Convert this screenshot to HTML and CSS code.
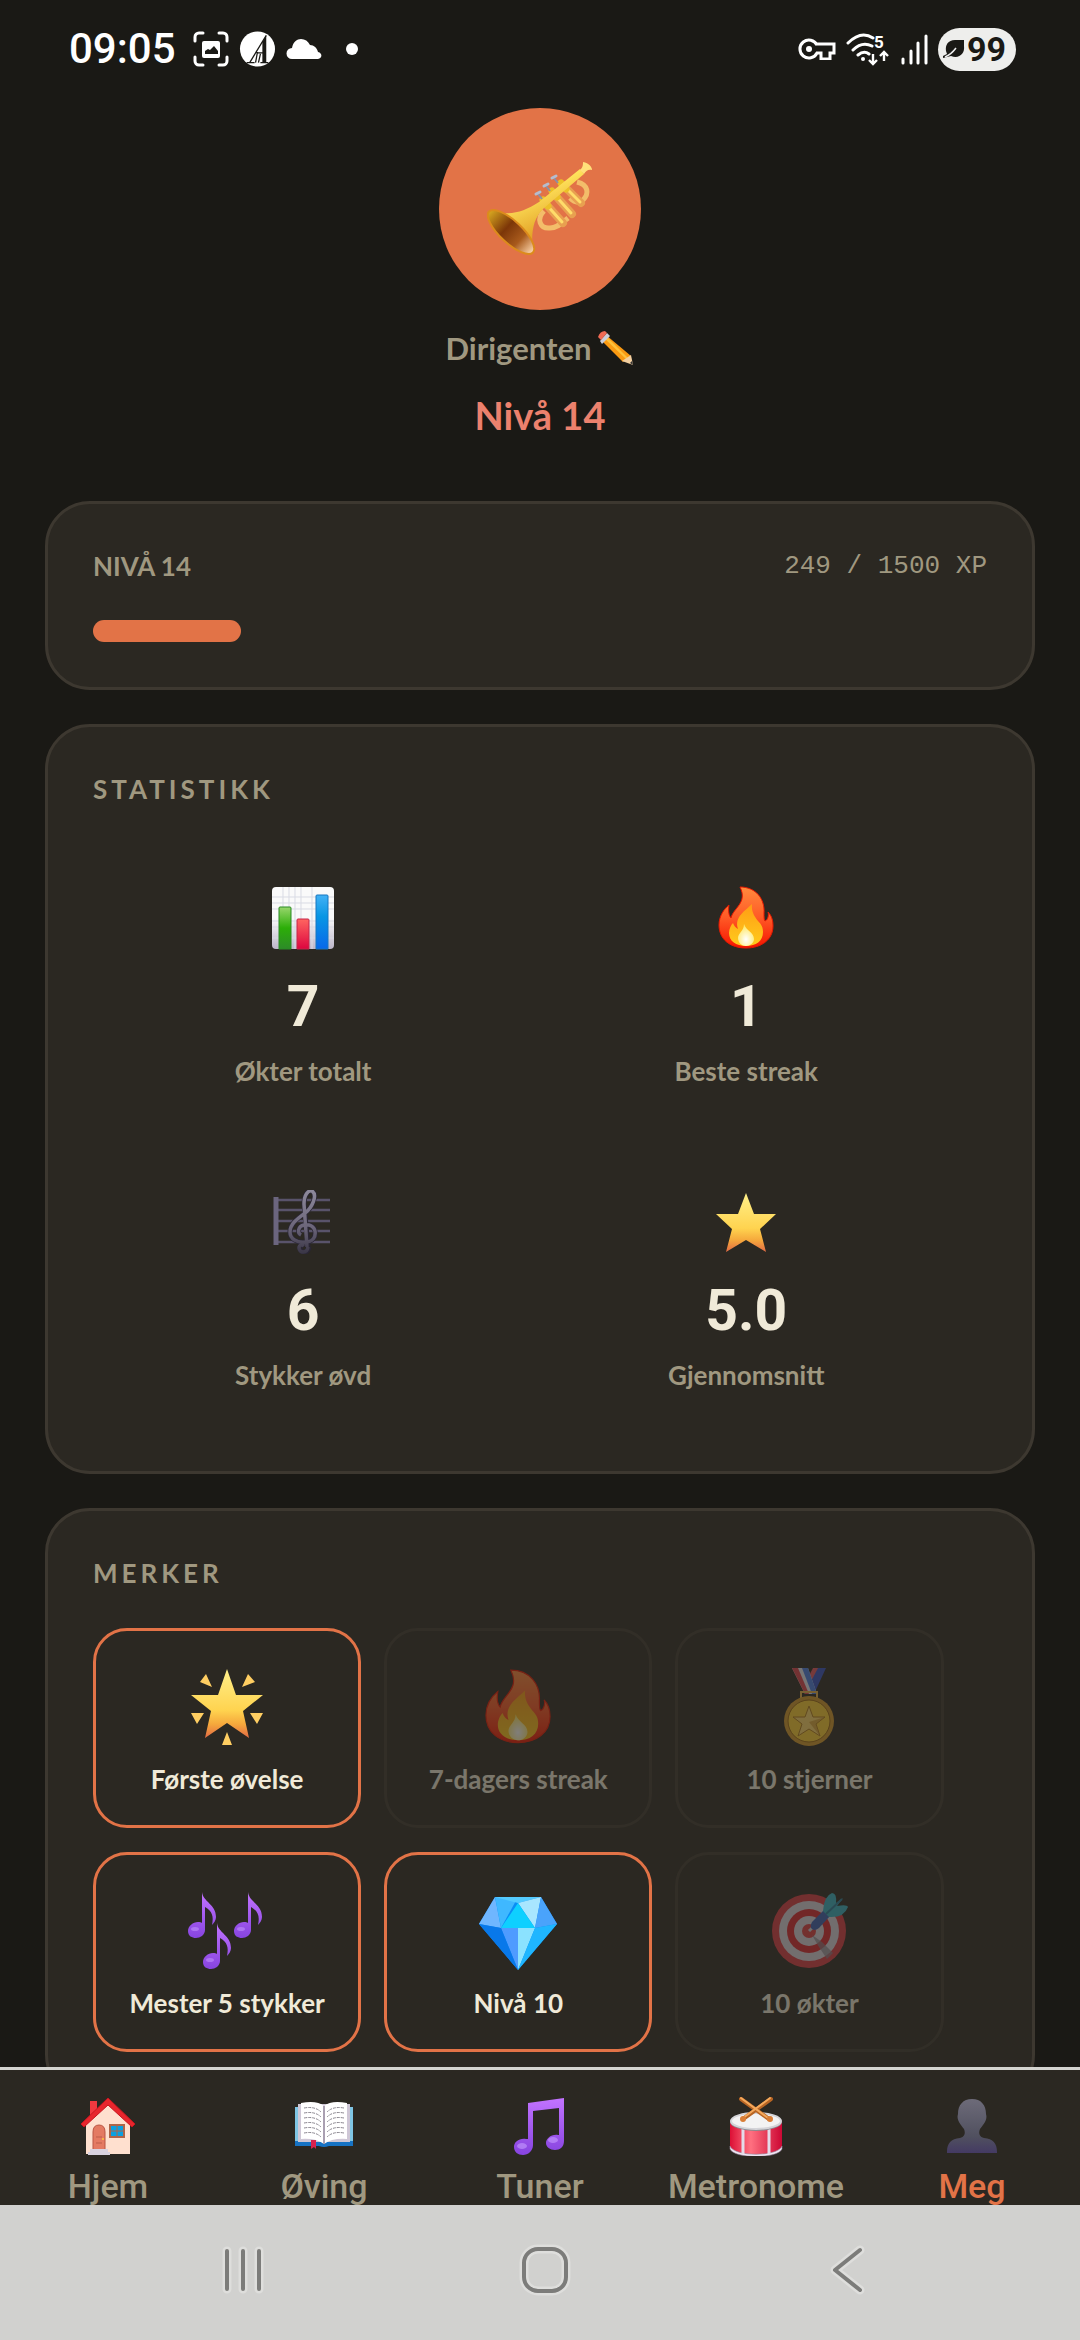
FILE: index.html
```html
<!DOCTYPE html>
<html lang="no">
<head>
  <meta charset="UTF-8">
  <meta name="viewport" content="width=device-width, initial-scale=1.0">
  <title>Min profil</title>
  <link rel="stylesheet" href="styles.css">
</head>
<body>

<!-- Delte ikoner og gradienter -->
<svg class="defs" width="0" height="0" aria-hidden="true">
  <defs>
    <linearGradient id="gold" x1="0" y1="0" x2="0" y2="1">
      <stop offset="0" stop-color="#fff08a"/><stop offset="0.6" stop-color="#ffd34f"/><stop offset="0.8" stop-color="#f5a83c"/><stop offset="1" stop-color="#e26a45"/>
    </linearGradient>
    <linearGradient id="flameRed" x1="0" y1="0" x2="0" y2="1">
      <stop offset="0" stop-color="#ff8a3d"/><stop offset="0.5" stop-color="#ff5a26"/><stop offset="1" stop-color="#f51400"/>
    </linearGradient>
    <linearGradient id="flameYellow" x1="0" y1="0" x2="0" y2="1">
      <stop offset="0" stop-color="#ff9d14"/><stop offset="1" stop-color="#ffcb1c"/>
    </linearGradient>
    <radialGradient id="flameCore" cx="0.5" cy="0.7" r="0.6">
      <stop offset="0" stop-color="#ffffff"/><stop offset="1" stop-color="#ffe96b"/>
    </radialGradient>
    <linearGradient id="purple" x1="0" y1="0" x2="0" y2="1">
      <stop offset="0" stop-color="#c273ff"/><stop offset="1" stop-color="#8744e0"/>
    </linearGradient>
    <linearGradient id="slate" x1="0" y1="0" x2="0" y2="1">
      <stop offset="0" stop-color="#8d899b"/><stop offset="0.6" stop-color="#6b6579"/><stop offset="1" stop-color="#3c3848"/>
    </linearGradient>
    <symbol id="flame" viewBox="0 0 64 64">
      <path d="M26 1C42 1 51 13 50 27c0 4 0 7 1 8 3-1 4-6 3-9 4 4 5 9 5 14 0 14-12 22-27 22S5 54 5 39c0-9 5-16 10-20-1 6 0 11 2 13 2-10 17-15 9-31z" fill="url(#flameRed)" stroke="#e81800" stroke-width="1"/>
      <path d="M38 18c-1 8 3 13 6 17 4 4 5 7 5 11 0 9-7 14-17 14S15 55 15 47c0-4 2-8 4-10 1 3 3 5 5 6-4-12 7-18 14-25z" fill="url(#flameYellow)"/>
      <path d="M30 38c2 7 10 8 10 15 0 4-4 7-8 7s-8-3-8-8c0-5 6-7 6-14z" fill="url(#flameCore)"/>
    </symbol>
    <symbol id="note" viewBox="0 0 30 48">
      <path d="M14 1c1 10 14 12 14 25 0 3-2 6-4 8 2-9 0-14-7-18v23c0 5-5 8-9 8s-8-2-8-7 5-9 10-9c2 0 3 0 4 1z" fill="url(#purple)"/>
      <ellipse cx="7" cy="38" rx="4" ry="2" fill="#c79bff" opacity="0.5"/>
    </symbol>
  </defs>
</svg>

<div class="app">

  <header class="status-bar">
    <div class="status-left">
      <time class="clock">09:05</time>
      <svg width="36" height="36" viewBox="0 0 36 36" aria-hidden="true">
        <path d="M2 10V6a4 4 0 0 1 4-4h4M26 2h4a4 4 0 0 1 4 4v4M34 26v4a4 4 0 0 1-4 4h-4M10 34H6a4 4 0 0 1-4-4v-4" fill="none" stroke="#fff" stroke-width="3" stroke-linecap="round"/>
        <rect x="9" y="10" width="18" height="17" rx="2" fill="#fff"/>
        <path d="M12 23v-3l3-2 2 1 4-4 4 5v3z" fill="#1a1915"/>
      </svg>
      <svg width="37" height="38" viewBox="0 0 38 38" aria-hidden="true">
        <circle cx="19" cy="19" r="18" fill="#fff"/>
        <path d="M11 33L28 5M8 33h8M22 33h8M18 23h7M19 22l-2 11M22 24l-2 9" fill="none" stroke="#1a1915" stroke-width="1.3"/>
        <path d="M24 12l4-7v28h-4z" fill="#1a1915"/>
      </svg>
      <svg width="36" height="22" viewBox="0 0 36 22" aria-hidden="true">
        <path d="M6 21a5 5 0 0 1 0-11C7 4 11 1 15 1c4 0 7 2 9 6 4 0 7 3 8 7 5 1 4 7 0 7z" fill="#fff"/>
      </svg>
      <span class="more-dot"></span>
    </div>
    <div class="status-right">
      <svg width="38" height="22" viewBox="0 0 38 22" aria-hidden="true">
        <path d="M19 7A9 9 0 1 0 19 15h4v6h9v-6h4V6H19z" fill="none" stroke="#fff" stroke-width="3"/>
        <circle cx="11" cy="11" r="3" fill="#fff"/>
      </svg>
      <svg class="wifi" width="44" height="36" viewBox="0 0 44 36" aria-hidden="true">
        <path d="M2 12q13-13 25-5M7 19q9-9 19-4M12 24q6-5 11-1" fill="none" stroke="#fff" stroke-width="3" stroke-linecap="round"/>
        <circle cx="17" cy="28" r="2" fill="#fff"/>
        <path d="M27 23v10M23 29l4 4 4-4M38 30V21M34 25l4-4 4 4" fill="none" stroke="#fff" stroke-width="2.4"/>
        <text x="28" y="17" font-family="Roboto, sans-serif" font-size="17" font-weight="700" fill="#fff">5</text>
      </svg>
      <svg width="28" height="32" viewBox="0 0 28 32" aria-hidden="true">
        <path d="M3 26v4M11 18v12M18 10v20M26 3v27" stroke="#fff" stroke-width="3" stroke-linecap="round"/>
      </svg>
      <span class="battery">
        <svg width="22" height="20" viewBox="0 0 22 20" aria-hidden="true">
          <path d="M21 1H12C5 1 2 6 3 12l1 3-4 2v2l8-2c8 3 14-2 13-10z" fill="#1a1915"/>
          <path d="M2 18C7 16 10 13 13 9" stroke="#eee" stroke-width="1.5" fill="none"/>
        </svg>
        99
      </span>
    </div>
  </header>

  <main class="content">
    <section class="profile">
      <div class="avatar">
        <svg width="106" height="96" viewBox="0 0 106 96" role="img" aria-label="Trompet">
          <defs>
            <linearGradient id="brass" x1="0" y1="0" x2="0.5" y2="1">
              <stop offset="0" stop-color="#d99a10"/><stop offset="0.4" stop-color="#ffe35c"/><stop offset="1" stop-color="#d88a12"/>
            </linearGradient>
            <linearGradient id="bell" x1="0" y1="0" x2="1" y2="0">
              <stop offset="0" stop-color="#d8a820"/><stop offset="0.4" stop-color="#7c3608"/><stop offset="0.7" stop-color="#a85a1c"/><stop offset="1" stop-color="#ffd9b0"/>
            </linearGradient>
          </defs>
          <path d="M90 21c12 3 12 12 6 18-5 4-9 2-13-2M57 50c-8 8-4 18 6 17 7 0 12-5 18-10" fill="none" stroke="#f3bd6a" stroke-width="5"/>
          <path d="M58 42l18 20M67 33l18 20M76 24l18 18" stroke="#e8a050" stroke-width="8" stroke-linecap="round"/>
          <path d="M57 41l18 20M66 32l18 20M75 23l18 18" stroke="#ffdc6a" stroke-width="3" stroke-linecap="round"/>
          <path d="M56 39l5 6M65 30l5 6M74 22l5 6" stroke="#ecc028" stroke-width="7" stroke-linecap="round"/>
          <path d="M51 33l4 5M59 25l4 5M67 17l4 5" stroke="#8b8fa6" stroke-width="2"/>
          <path d="M49 33l4-2M57 25l4-2M65 17l4-2" stroke="#b5bccd" stroke-width="3" stroke-linecap="round"/>
          <path d="M2 50c20 5 33 2 50-9L93 8l4 5L57 47c-12 11-13 27-11 45z" fill="url(#brass)"/>
          <path d="M93 9c3-3 3-5 3-8 6 1 9 5 9 8-4-1-6 1-8 4z" fill="#ffe07a"/>
          <ellipse cx="24" cy="71" rx="30" ry="11" transform="rotate(43 24 71)" fill="url(#bell)" stroke="#dc8b1c" stroke-width="2"/>
        </svg>
      </div>
      <button class="name" type="button">
        Dirigenten
        <svg width="36" height="36" viewBox="0 0 36 36" aria-hidden="true">
          <path d="M8 5l25 21-8 6L3 10z" fill="#fb9a12"/>
          <path d="M6 8l22 21 2-1L8 6z" fill="#ffc13a"/>
          <path d="M33 25l2 10-11-4z" fill="#f3cfa0"/>
          <path d="M32 33l3 2-1-4z" fill="#333"/>
          <path d="M2 11L9 3l3 3-8 8z" fill="#c9cdd8"/>
          <path d="M0 7q2-6 7-6l2 2-6 7z" fill="#ef6a53"/>
        </svg>
      </button>
      <h1 class="level">Nivå 14</h1>
    </section>

    <section class="card">
      <div class="xp-row">
        <span class="xp-level">NIVÅ 14</span>
        <span class="xp-value">249 / 1500 XP</span>
      </div>
      <div class="xp-track">
        <div class="xp-fill" style="width: 16.6%"></div>
      </div>
    </section>

    <section class="card">
      <h2>STATISTIKK</h2>
      <div class="stats">
        <div class="stat">
          <svg class="stat-icon" viewBox="0 0 64 64" aria-hidden="true">
            <defs>
              <linearGradient id="paper" x1="0" y1="0" x2="0" y2="1"><stop offset="0.5" stop-color="#fafafa"/><stop offset="1" stop-color="#bdb6c9"/></linearGradient>
              <linearGradient id="barGreen" x1="0" y1="0" x2="0" y2="1"><stop offset="0" stop-color="#98d66c"/><stop offset="0.5" stop-color="#2cae08"/><stop offset="1" stop-color="#2d8b28"/></linearGradient>
              <linearGradient id="barRed" x1="0" y1="0" x2="0" y2="1"><stop offset="0" stop-color="#ff6560"/><stop offset="1" stop-color="#dd053f"/></linearGradient>
              <linearGradient id="barBlue" x1="0" y1="0" x2="0" y2="1"><stop offset="0" stop-color="#42b1f5"/><stop offset="0.4" stop-color="#0796e4"/><stop offset="1" stop-color="#0868ea"/></linearGradient>
            </defs>
            <rect x="1" y="1" width="62" height="62" rx="4" fill="url(#paper)"/>
            <path d="M1 11h62M1 17h62M1 23h62M1 35h62M1 41h62M1 52h62M12 1v62M18 1v62M24 1v62M30 1v62M41 1v62" stroke="#d9dbe4" stroke-width="1"/>
            <path d="M8 63V22q0-1 1-1h10q1 0 1 1v41z" fill="url(#barGreen)" stroke="#2b8b24"/>
            <path d="M26 63V34q0-1 1-1h10q1 0 1 1v29z" fill="url(#barRed)" stroke="#c6274a"/>
            <path d="M45 63V10q0-1 1-1h10q1 0 1 1v53z" fill="url(#barBlue)" stroke="#1676c0"/>
          </svg>
          <strong>7</strong>
          <span>Økter totalt</span>
        </div>
        <div class="stat">
          <svg class="stat-icon" viewBox="0 0 64 64" aria-hidden="true"><use href="#flame"/></svg>
          <strong>1</strong>
          <span>Beste streak</span>
        </div>
        <div class="stat">
          <svg class="stat-icon" viewBox="0 0 64 64" aria-hidden="true">
            <path d="M5 10h54M5 20h54M5 31h54M5 41h54M5 52h54" stroke="#59536b" stroke-width="2.4"/>
            <path d="M5 7v48" stroke="#6b657e" stroke-width="5"/>
            <path d="M38 57c-1 7-9 6-9 1 0-3 3-4 5-2M37 57L33 14C33 5 37 0 41 1c6 4 0 17-7 22-8 6-15 11-15 19 0 7 7 11 15 10 8 0 11-5 10-11-1-5-6-7-11-6-6 1-7 8-3 10" fill="none" stroke="#2a2635" stroke-width="5"/>
            <path d="M37 57c-1 7-9 6-9 1 0-3 3-4 5-2M36 57L33 14C33 5 37 0 41 1c6 4 0 17-7 22-8 6-15 11-15 19 0 7 7 11 15 10 8 0 11-5 10-11-1-5-6-7-11-6-6 1-7 8-3 10" fill="none" stroke="url(#slate)" stroke-width="3.5"/>
          </svg>
          <strong>6</strong>
          <span>Stykker øvd</span>
        </div>
        <div class="stat">
          <svg class="stat-icon" viewBox="0 0 64 64" aria-hidden="true">
            <path d="M32 3l8 21h22L46 39l6 23-20-12-20 12 6-23L2 24h22z" fill="url(#gold)"/>
          </svg>
          <strong>5.0</strong>
          <span>Gjennomsnitt</span>
        </div>
      </div>
    </section>

    <section class="card">
      <h2>MERKER</h2>
      <div class="badges">
        <div class="badge unlocked">
          <svg class="badge-icon" viewBox="0 0 80 80" aria-hidden="true">
            <path d="M40 2l9 26h27L56 44l6 27-22-15-22 15 6-27L4 28h27z" fill="url(#gold)"/>
            <path d="M19 7l6 13-12-5zM61 7l-6 13 13-5zM4 46h13l-7 11zM76 46H63l7 11zM40 65l5 13H35z" fill="#ffce62"/>
          </svg>
          <span>Første øvelse</span>
        </div>
        <div class="badge">
          <svg class="badge-icon" viewBox="0 0 80 80" aria-hidden="true"><use href="#flame" x="2" y="2" width="76" height="76"/></svg>
          <span>7-dagers streak</span>
        </div>
        <div class="badge">
          <svg class="badge-icon" viewBox="0 0 80 80" aria-hidden="true">
            <path d="M47 1h10L45 27h-9z" fill="#3451c4"/>
            <path d="M44 1h5L38 22l-3-4z" fill="#e65560"/>
            <path d="M23 1h16l9 26H36z" fill="#e9e9f2"/>
            <path d="M23 1h6l11 26h-4z" fill="#e0434e"/>
            <path d="M33 1h6l9 26h-5z" fill="#4b7ee6"/>
            <path d="M32 25h16v6H32z" fill="none" stroke="#eab34c" stroke-width="2"/>
            <circle cx="40" cy="54" r="25" fill="#d69a2a"/>
            <circle cx="40" cy="54" r="21" fill="#ffcf32" stroke="#9f6a12" stroke-width="1"/>
            <path d="M40 39l4 11h12l-9 7 4 12-11-7-11 7 4-12-9-7h12z" fill="#ffd668" stroke="#b37d1b" stroke-width="1"/>
            <path d="M40 39v16l16-5-9 7 4 12-11-14-11 14 11-14z" fill="#c98d22" opacity="0.6"/>
          </svg>
          <span>10 stjerner</span>
        </div>
        <div class="badge unlocked">
          <svg class="badge-icon" viewBox="0 0 80 80" aria-hidden="true">
            <use href="#note" x="0" y="0" width="32" height="48"/>
            <use href="#note" x="46" y="0" width="32" height="48"/>
            <use href="#note" x="15" y="31" width="32" height="48"/>
          </svg>
          <span>Mester 5 stykker</span>
        </div>
        <div class="badge unlocked">
          <svg class="badge-icon" viewBox="0 0 80 80" aria-hidden="true">
            <path d="M17 6h46l16 27-39 46L1 33z" fill="#0a8df5"/>
            <path d="M17 6L1 33l22 4z" fill="#6fb6ff"/>
            <path d="M17 6h23L23 37z" fill="#3fb8ff"/>
            <path d="M17 6h46L40 12z" fill="#54cbff"/>
            <path d="M40 12l23-6-6 31z" fill="#a8e6ff"/>
            <path d="M63 6l16 27-22 4z" fill="#4aa3fb"/>
            <path d="M40 12l17 25H23z" fill="#0ed0ff"/>
            <path d="M23 37h17v42z" fill="#4f9bff"/>
            <path d="M40 37h17L40 79z" fill="#8be2ff"/>
            <path d="M57 37l22-4-39 46z" fill="#1fb6ff"/>
            <path d="M1 33l22 4 17 42z" fill="#0878ea"/>
          </svg>
          <span>Nivå 10</span>
        </div>
        <div class="badge">
          <svg class="badge-icon" viewBox="0 0 80 80" aria-hidden="true">
            <circle cx="40" cy="40" r="37" fill="#dc3b44"/>
            <circle cx="40" cy="40" r="30" fill="#dcd6e0"/>
            <circle cx="40" cy="40" r="22" fill="#dd2730"/>
            <circle cx="40" cy="40" r="15" fill="#dcd6e0"/>
            <circle cx="40" cy="40" r="7" fill="#e03d42"/>
            <path d="M43 44l10 7 11 11-6 6-8-12z" fill="#8b8490" opacity="0.7"/>
            <path d="M40 40l20-19" stroke="#d0d4e0" stroke-width="3"/>
            <path d="M43 31l12-12 6 6-11 12q-5 4-8 0-1-3 1-6z" fill="#3a60b4"/>
            <path d="M54 20q1-15 9-18 5 0 4 10l7-5-6 8q10-2 11 1-4 11-19 10z" fill="#35b2c4"/>
            <path d="M57 23L73 8" stroke="#2a7c9c" stroke-width="2"/>
          </svg>
          <span>10 økter</span>
        </div>
      </div>
    </section>
  </main>

  <nav class="tab-bar">
    <a href="#hjem">
      <svg class="tab-icon" viewBox="0 0 60 60" aria-hidden="true">
        <path d="M12 5h7v14h-7z" fill="#f0393f"/>
        <path d="M8 25L30 7l22 20v31H8z" fill="#ffe0cf"/>
        <path d="M30 2l27 26-3 3L30 9 6 31l-3-3z" fill="#e8262d" stroke="#c9151f" stroke-width="1"/>
        <path d="M15 54V36q0-7 6-7t6 7v18z" fill="#e47a62" stroke="#b95442"/>
        <path d="M18 41h6M18 47h6" stroke="#bd5d48"/>
        <circle cx="25" cy="43" r="1" fill="#ffc83b"/>
        <path d="M32 29h14v12H32z" fill="#0aa0e0" stroke="#b06548" stroke-width="2"/>
        <path d="M39 29v12M32 35h14" stroke="#b06548"/>
        <path d="M12 53h18v3h2v3H10v-3h2z" fill="#d9d3e0"/>
      </svg>
      <span>Hjem</span>
    </a>
    <a href="#oving">
      <svg class="tab-icon" viewBox="0 0 60 60" aria-hidden="true">
        <path d="M1 11h58v39H35q-5 2-10 0H1z" fill="#1773c4"/>
        <path d="M1 11h58v34H1z" fill="#7fc5e4"/>
        <path d="M4 8h52v38H4z" fill="#cfc7d6"/>
        <path d="M7 7q16-3 23 3 7-6 23-3v36q-15-1-23 5-8-6-23-5z" fill="#fff"/>
        <path d="M30 10v38" stroke="#aaa0b2" stroke-width="2"/>
        <path d="M10 12q11-2 17 4M10 17q11-2 17 4M10 22q11-2 17 4M10 27q11-2 17 4M10 32q11-2 17 4M10 37q11-2 17 4M50 12q-11-2-17 4M50 17q-11-2-17 4M50 22q-11-2-17 4M50 27q-11-2-17 4M50 32q-11-2-17 4M50 37q-11-2-17 4" fill="none" stroke="#8b8790" stroke-width="1" stroke-dasharray="3 1"/>
        <path d="M17 44h5v9l-2-2-3 2z" fill="#d9214e"/>
      </svg>
      <span>Øving</span>
    </a>
    <a href="#tuner">
      <svg class="tab-icon" viewBox="0 0 60 60" aria-hidden="true">
        <path d="M18 7l36-5v43c0 6-4 9-9 9s-9-3-9-7 5-9 12-8h1V12l-26 3v34c0 6-5 10-10 10s-9-3-9-8 5-9 12-8h2z" fill="url(#purple)"/>
        <ellipse cx="43" cy="44" rx="5" ry="3" fill="#c79bff" opacity="0.6"/>
        <ellipse cx="12" cy="50" rx="5" ry="3" fill="#c79bff" opacity="0.6"/>
      </svg>
      <span>Tuner</span>
    </a>
    <a href="#metronome">
      <svg class="tab-icon" viewBox="0 0 60 60" aria-hidden="true">
        <defs><linearGradient id="drum"><stop offset="0" stop-color="#dc0f35"/><stop offset="0.4" stop-color="#ff7080"/><stop offset="1" stop-color="#cc0834"/></linearGradient></defs>
        <path d="M4 26v25c4 11 48 11 52 0V26z" fill="url(#drum)"/>
        <path d="M4 50c4 11 48 11 52 0v3c-4 10-48 10-52 0z" fill="#efe7f4" stroke="#8e7f96" stroke-width="0.6"/>
        <path d="M17 33v25M43 33v25" stroke="#e4dbe9" stroke-width="3"/>
        <ellipse cx="30" cy="26" rx="26" ry="9" fill="#8b8b90"/>
        <ellipse cx="30" cy="25" rx="25" ry="8" fill="#f3f3f3" stroke="#d4d4d8" stroke-width="2"/>
        <path d="M15 3l28 20M45 3L17 23" stroke="#b86524" stroke-width="4" stroke-linecap="round"/>
        <path d="M15 2l27 20M44 2L17 22" stroke="#f5a95c" stroke-width="2" stroke-linecap="round"/>
        <circle cx="17" cy="23" r="3" fill="#d97e36"/><circle cx="44" cy="23" r="3" fill="#d97e36"/>
      </svg>
      <span>Metronome</span>
    </a>
    <a href="#meg" class="active">
      <svg class="tab-icon" viewBox="0 0 60 60" aria-hidden="true">
        <defs><linearGradient id="person" x1="0" y1="0" x2="0" y2="1"><stop offset="0" stop-color="#6d6b79"/><stop offset="0.7" stop-color="#50505f"/><stop offset="1" stop-color="#443a63"/></linearGradient></defs>
        <path d="M30 3c9 0 14 6 14 15 2 6-3 11-6 15-2 5 0 8 4 9 9 1 13 5 13 14v1H5v-1c0-9 4-13 13-14 4-1 6-4 4-9-3-4-8-9-6-15C16 9 21 3 30 3z" fill="url(#person)"/>
      </svg>
      <span>Meg</span>
    </a>
  </nav>

  <footer class="system-nav">
    <button type="button" aria-label="Nylige apper">
      <svg width="52" height="52" viewBox="0 0 52 52">
        <path class="halo" d="M10 7v38M26 7v38M42 7v38"/>
        <path class="line" d="M10 7v38M26 7v38M42 7v38"/>
      </svg>
    </button>
    <button type="button" aria-label="Hjem">
      <svg width="52" height="52" viewBox="0 0 52 52">
        <rect class="halo" x="5" y="5" width="42" height="42" rx="14"/>
        <rect class="line" x="5" y="5" width="42" height="42" rx="14"/>
      </svg>
    </button>
    <button type="button" aria-label="Tilbake">
      <svg width="52" height="52" viewBox="0 0 52 52">
        <path class="halo" d="M39 6L14 26l25 20"/>
        <path class="line" d="M39 6L14 26l25 20"/>
      </svg>
    </button>
  </footer>

</div>

</body>
</html>
```

FILE: styles.css
```css
* {
    box-sizing: border-box;
}
body {
    margin: 0;
    background: #1a1915;
    color: #f0ead8;
    font-family: Lato, sans-serif;
    font-size: 26px;
    font-weight: 700;
    line-height: 34px;
}
svg {
    display: block;
}
button {
    border: none;
    padding: 0;
    background: none;
    font: inherit;
    color: inherit;
    cursor: pointer;
}
.defs {
    position: absolute;
}
.app {
    display: flex;
    flex-direction: column;
    height: 100vh;
}

/* Statuslinje */
.status-bar {
    display: flex;
    justify-content: space-between;
    align-items: center;
    flex: none;
    height: 98px;
    padding: 0 64px 0 69px;
    color: #fff;
    font-family: Roboto, sans-serif;
}
.status-left {
    display: flex;
    align-items: center;
    gap: 10px;
}
.status-right {
    display: flex;
    align-items: center;
    gap: 10px;
}
.clock {
    margin-right: 7px;
    font-size: 42px;
    font-weight: 500;
}
.more-dot {
    width: 12px;
    height: 12px;
    margin-left: 14px;
    border-radius: 50%;
    background: #fff;
}
.battery {
    display: flex;
    align-items: center;
    gap: 2px;
    height: 43px;
    padding: 0 10px 0 5px;
    border-radius: 22px;
    background: #eeeeec;
    color: #1a1915;
    font-size: 34px;
    font-weight: 700;
}

/* Innhold */
.content {
    flex: 1;
    min-height: 0;
    overflow-y: auto;
    scrollbar-width: none;
    padding: 10px 45px 45px;
}
.profile {
    display: flex;
    flex-direction: column;
    align-items: center;
    margin-bottom: 62px;
}
.avatar {
    display: flex;
    align-items: center;
    justify-content: center;
    width: 202px;
    height: 202px;
    border-radius: 50%;
    background: #e27347;
}
.name {
    display: flex;
    align-items: center;
    gap: 7px;
    margin-top: 18px;
    color: #a09880;
    font-size: 31px;
    line-height: 40px;
}
.level {
    margin: 23px 0 0;
    color: #ec816d;
    font-size: 38px;
    font-weight: 700;
    line-height: 48px;
}
.card {
    margin-bottom: 34px;
    padding: 45px;
    border: 3px solid #3d3830;
    border-radius: 45px;
    background: #2b2822;
}
.card h2 {
    margin: 0 0 38px;
    color: #a09880;
    font-size: 26px;
    font-weight: 700;
    letter-spacing: 4px;
}
.xp-row {
    display: flex;
    justify-content: space-between;
    margin-bottom: 37px;
    color: #a09880;
}
.xp-value {
    font-family: "Liberation Mono", monospace;
    font-weight: 400;
}
.xp-track {
    height: 22px;
}
.xp-fill {
    height: 100%;
    border-radius: 11px;
    background: #e27347;
}

.stats {
    display: flex;
    flex-wrap: wrap;
    gap: 26px 23px;
}
.stat {
    display: flex;
    flex-direction: column;
    align-items: center;
    width: 47%;
    padding: 42px 0 34px;
    color: #a09880;
}
.stat-icon {
    width: 64px;
    height: 64px;
}
.stat strong {
    margin: 23px 0 13px;
    color: #f0ead8;
    font-family: Roboto, sans-serif;
    font-size: 57px;
    font-weight: 700;
    line-height: 68px;
}

.badges {
    display: flex;
    flex-wrap: wrap;
    gap: 24px 23px;
}
.badge {
    display: flex;
    flex-direction: column;
    align-items: center;
    width: 30%;
    padding: 36px 0 29px;
    border: 3px solid #3d3830;
    border-radius: 34px;
    gap: 15px;
    white-space: nowrap;
    opacity: 0.4;
}
.badge.unlocked {
    border-color: #e27347;
    opacity: 1;
}
.badge-icon {
    width: 80px;
    height: 80px;
}

/* Faner nederst */
.tab-bar {
    display: grid;
    grid-template-columns: repeat(5, 1fr);
    flex: none;
    height: 138px;
    overflow: hidden;
    border-top: 3px solid #d4d4d0;
    background: #2b2822;
    font-family: Roboto, sans-serif;
    font-size: 34px;
    font-weight: 500;
    line-height: 40px;
}
.tab-bar a {
    display: flex;
    flex-direction: column;
    align-items: center;
    gap: 10px;
    padding-top: 26px;
    color: #a09880;
    text-decoration: none;
}
.tab-bar .active {
    color: #e27347;
}
.tab-icon {
    width: 60px;
    height: 60px;
}

/* Systemknapper */
.system-nav {
    display: flex;
    justify-content: center;
    align-items: center;
    gap: 250px;
    flex: none;
    height: 135px;
    padding: 0 0 6px 10px;
    background: #d1d1cf;
}
.system-nav path,
.system-nav rect {
    fill: none;
    stroke-linecap: round;
    stroke-linejoin: round;
}
.system-nav .halo {
    stroke: #dededc;
    stroke-width: 9px;
}
.system-nav .line {
    stroke: #7c7c7a;
    stroke-width: 4px;
}
```
